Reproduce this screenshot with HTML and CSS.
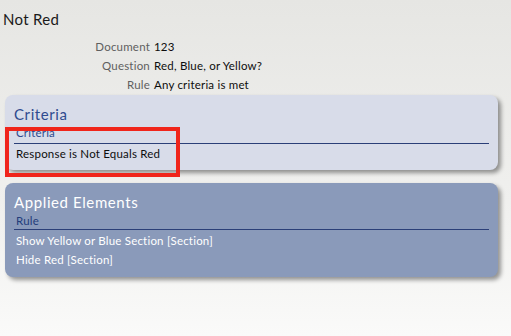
FILE: index.html
```html
<!DOCTYPE html>
<html>
<head>
<meta charset="utf-8">
<link rel="stylesheet" href="styles.css">
</head>
<body>
<h1 class="title">Not Red</h1>
<div class="info">
  <div class="label">Document</div><div class="value">123</div>
  <div class="label">Question</div><div class="value">Red, Blue, or Yellow?</div>
  <div class="label">Rule</div><div class="value">Any criteria is met</div>
</div>
<div class="panel panel-light">
  <div class="panel-head">Criteria</div>
  <div class="panel-sub">Criteria</div>
  <div class="panel-item">Response is Not Equals Red</div>
  <div class="highlight"></div>
</div>
<div class="panel panel-dark">
  <div class="panel-head">Applied Elements</div>
  <div class="panel-sub">Rule</div>
  <div class="panel-list">
    <div class="panel-item">Show Yellow or Blue Section [Section]</div>
    <div class="panel-item">Hide Red [Section]</div>
  </div>
</div>
</body>
</html>
```
FILE: styles.css
```css
html, body {
  margin: 0;
  padding: 0;
}
body {
  width: 511px;
  height: 336px;
  overflow: hidden;
  font-family: Lato, "Open Sans", sans-serif;
  background: linear-gradient(to bottom, #e6e6e3 0%, #f0f0ee 60%, #fafaf9 100%);
  color: #111;
}
.title {
  margin: 0;
  padding: 9px 0 0 3px;
  font-size: 15px;
  letter-spacing: 0.3px;
  line-height: 20px;
  font-weight: normal;
  color: #1a1a1a;
}
.info {
  display: grid;
  grid-template-columns: 150px auto;
  column-gap: 4px;
  margin-top: 8px;
  font-size: 11.5px;
  letter-spacing: 0.2px;
  line-height: 19px;
}
.label {
  text-align: right;
  color: #5f5f5f;
}
.value {
  color: #0d0d0d;
}
.panel {
  position: relative;
  margin: 1px 13px 0 5px;
  padding: 9px 9px 7px 9px;
  border-radius: 8px;
  box-shadow: 3px 3px 4px rgba(0, 0, 0, 0.4);
}
.panel-light {
  background: #d8dce9;
}
.panel-dark {
  margin-top: 13px;
  background: #8a9aba;
  padding-bottom: 8px;
}
.panel-head {
  font-size: 15px;
  letter-spacing: 0.6px;
  line-height: 20px;
}
.panel-light .panel-head {
  color: #2f4b8f;
}
.panel-dark .panel-head {
  color: #ffffff;
}
.panel-sub {
  font-size: 11.5px;
  letter-spacing: 0.2px;
  line-height: 17px;
  padding-left: 2px;
  border-bottom: 1px solid #2b3f78;
}
.panel-light .panel-sub {
  color: #2f4b8f;
  padding-bottom: 2px;
}
.panel-dark .panel-sub {
  color: #233d7a;
  padding-bottom: 0;
}
.panel-list {
  padding-top: 1px;
}
.panel-item {
  font-size: 11.5px;
  letter-spacing: 0.2px;
  line-height: 19px;
  padding-left: 2px;
}
.panel-light .panel-item {
  color: #0d0d0d;
}
.panel-dark .panel-item {
  color: #ffffff;
}
.highlight {
  position: absolute;
  left: 0;
  top: 32px;
  width: 175px;
  height: 50px;
  box-sizing: border-box;
  border: 4px solid #f0251b;
}
```
